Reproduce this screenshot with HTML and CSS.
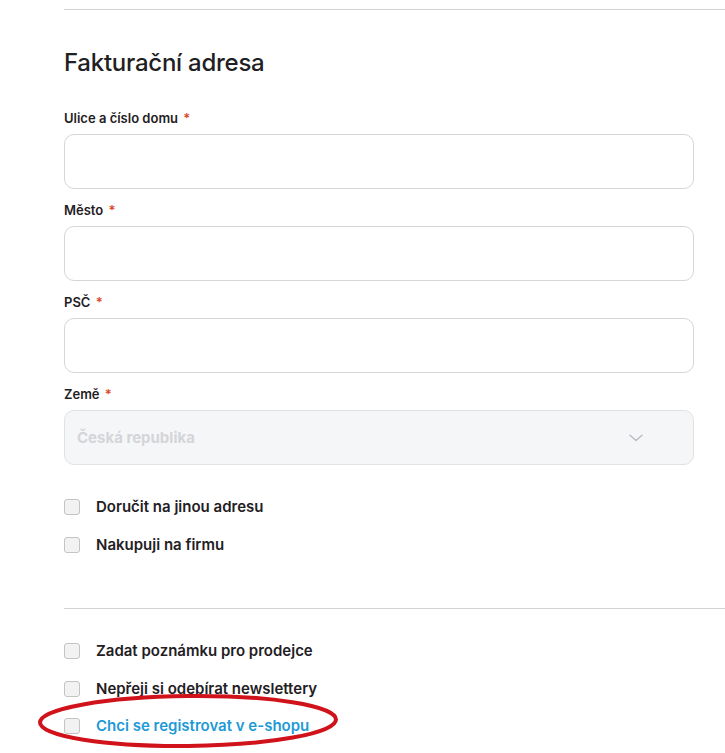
FILE: index.html
```html
<!DOCTYPE html>
<html lang="cs">
<head>
<meta charset="utf-8">
<link rel="stylesheet" href="styles.css">
</head>
<body>
<div class="page">
  <hr class="divider top">
  <h2 class="title">Fakturační adresa</h2>

  <div class="field">
    <label class="label">Ulice a číslo domu <span class="req">*</span></label>
    <div class="input"></div>
  </div>
  <div class="field">
    <label class="label">Město <span class="req">*</span></label>
    <div class="input"></div>
  </div>
  <div class="field">
    <label class="label">PSČ <span class="req">*</span></label>
    <div class="input"></div>
  </div>
  <div class="field">
    <label class="label">Země <span class="req">*</span></label>
    <div class="input select">
      <span class="select-text">Česká republika</span>
      <svg class="chevron" width="14" height="8" viewBox="0 0 14 8"><path d="M1 1.2 L7 6.5 L13 1.2" fill="none" stroke="#b9bcc2" stroke-width="1.4" stroke-linecap="round" stroke-linejoin="round"/></svg>
    </div>
  </div>

  <div class="checks first">
    <div class="check"><span class="box"></span><span class="check-text">Doručit na jinou adresu</span></div>
    <div class="check"><span class="box"></span><span class="check-text">Nakupuji na firmu</span></div>
  </div>

  <hr class="divider bottom">

  <div class="checks second">
    <div class="check"><span class="box"></span><span class="check-text">Zadat poznámku pro prodejce</span></div>
    <div class="check"><span class="box"></span><span class="check-text">Nepřeji si odebírat newslettery</span></div>
    <div class="check register"><span class="box"></span><span class="check-text link">Chci se registrovat v e-shopu</span>
      <svg class="ring" width="320" height="60" viewBox="0 0 320 60"><ellipse cx="156" cy="30" rx="148" ry="25" fill="none" stroke="#d0121b" stroke-width="4" transform="rotate(-0.6 156 30)"/></svg>
    </div>
  </div>
</div>
</body>
</html>
```

FILE: styles.css
```css
* { box-sizing: border-box; }
html, body { margin: 0; padding: 0; background: #fff; }
body {
  font-family: Inter, "Liberation Sans", sans-serif;
  color: #1f2023;
  width: 725px;
  height: 753px;
  overflow: hidden;
}
.page {
  padding: 9px 31px 0 64px;
}
.divider {
  border: 0;
  height: 1px;
  background: #d2d2d2;
  margin: 0 -31px 0 0;
}
.title {
  font-size: 24px;
  font-weight: 500;
  line-height: 30px;
  margin: 38px 0 30px;
  letter-spacing: -0.25px;
}
.field { margin-bottom: 11px; }
.label {
  display: block;
  font-size: 13px;
  font-weight: 600;
  line-height: 20px;
  margin-bottom: 6px;
}
.req { color: #d9462a; margin-left: 2px; }
.input {
  height: 55px;
  border: 1px solid #d6d6d6;
  border-radius: 10px;
  background: #fff;
}
.select {
  background: #f5f6f8;
  border-color: #e1e2e5;
  display: flex;
  align-items: center;
  justify-content: space-between;
  padding: 0 50px 0 12px;
}
.select-text {
  font-size: 15px;
  font-weight: 700;
  color: #d4d5d8;
}
.chevron { display: block; margin-top: 1px; }
.checks { display: flex; flex-direction: column; }
.checks.first { margin-top: 34px; gap: 22px; margin-bottom: 55px; }
.checks.second { margin-top: 34px; gap: 22px; }
.check {
  display: flex;
  align-items: center;
  height: 16px;
  position: relative;
}
.box {
  width: 16px;
  height: 16px;
  border: 1px solid #c4c4c4;
  border-radius: 3px;
  background: #f2f2f2;
  flex: none;
  margin-right: 16px;
}
.check-text {
  font-size: 15px;
  font-weight: 600;
  line-height: 20px;
}
.link { color: #1d9ad6; }
.register { margin-top: -1px; }
.ring {
  position: absolute;
  left: -32px;
  top: -27px;
  pointer-events: none;
}
```
